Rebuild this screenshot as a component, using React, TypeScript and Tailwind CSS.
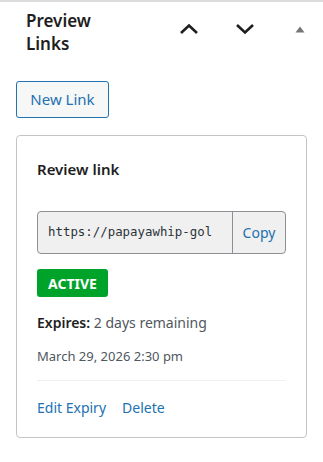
import React from "react";

export default function App() {
  const font = { fontFamily: '"Noto Sans", "Open Sans", sans-serif' };
  return (
    <div className="w-[323px] h-[462px] bg-white border-t-2 border-[#dcdcde] overflow-hidden" style={font}>
      <div className="flex items-start pl-[26px] pt-[7px]">
        <h2 className="w-[100px] text-[17px] leading-[23px] font-semibold text-[#1e1e1e]">Preview Links</h2>
        <div className="flex items-center ml-auto mt-[14px] mr-[18px]">
          <svg width="20" height="12" viewBox="0 0 20 12" className="ml-[56px]">
            <path d="M2 10 L10 2.5 L18 10" fill="none" stroke="#1e1e1e" strokeWidth="2.6" />
          </svg>
          <svg width="20" height="12" viewBox="0 0 20 12" className="ml-[36px]">
            <path d="M2 2 L10 9.5 L18 2" fill="none" stroke="#1e1e1e" strokeWidth="2.6" />
          </svg>
          <svg width="10" height="7" viewBox="0 0 10 7" className="ml-[40px]">
            <path d="M0.5 6.5 L5 0.5 L9.5 6.5 Z" fill="#757575" />
          </svg>
        </div>
      </div>
      <div className="px-4">
        <button className="mt-[26px] h-[37px] w-[93px] rounded-[3px] border border-[#2271b1] bg-[#f6f7f7] text-[#2271b1] text-[15px]">
          New Link
        </button>
        <div className="mt-[17px] w-[291px] h-[303px] rounded-[4px] border border-[#c3c4c7] px-5 pt-[21px]">
          <div className="text-[15px] leading-[24px] font-semibold text-[#1e1e1e]">Review link</div>
          <div className="mt-[30px] flex h-[43px] w-[249px] rounded-[4px] border border-[#8c8f94] bg-[#f0f0f0] overflow-hidden">
            <div className="flex-1 flex items-center pl-[10px] overflow-hidden whitespace-nowrap text-[#2c3338] text-[12.4px]" style={{ fontFamily: '"DejaVu Sans Mono", monospace' }}>
              https://papayawhip-gol
            </div>
            <div className="w-[53px] border-l border-[#8c8f94] flex items-center justify-center text-[#2271b1] text-[14px]">
              Copy
            </div>
          </div>
          <div className="mt-[15px] inline-flex h-[28px] w-[71px] items-center justify-center rounded-[3px] bg-[#00a32a] text-white text-[14px] font-bold">
            ACTIVE
          </div>
          <div className="mt-[15px] text-[14px] leading-[22px]">
            <span className="font-semibold text-[#1e1e1e]">Expires:</span>{" "}
            <span className="text-[#50575e]">2 days remaining</span>
          </div>
          <div className="mt-[12px] text-[13px] leading-[20px] text-[#50575e]">March 29, 2026 2:30 pm</div>
          <div className="mt-[14px] border-t border-[#f0f0f1]"></div>
          <div className="mt-[16px] flex gap-[16px] text-[14px] leading-[22px] text-[#2271b1]">
            <span>Edit Expiry</span>
            <span>Delete</span>
          </div>
        </div>
      </div>
    </div>
  );
}
